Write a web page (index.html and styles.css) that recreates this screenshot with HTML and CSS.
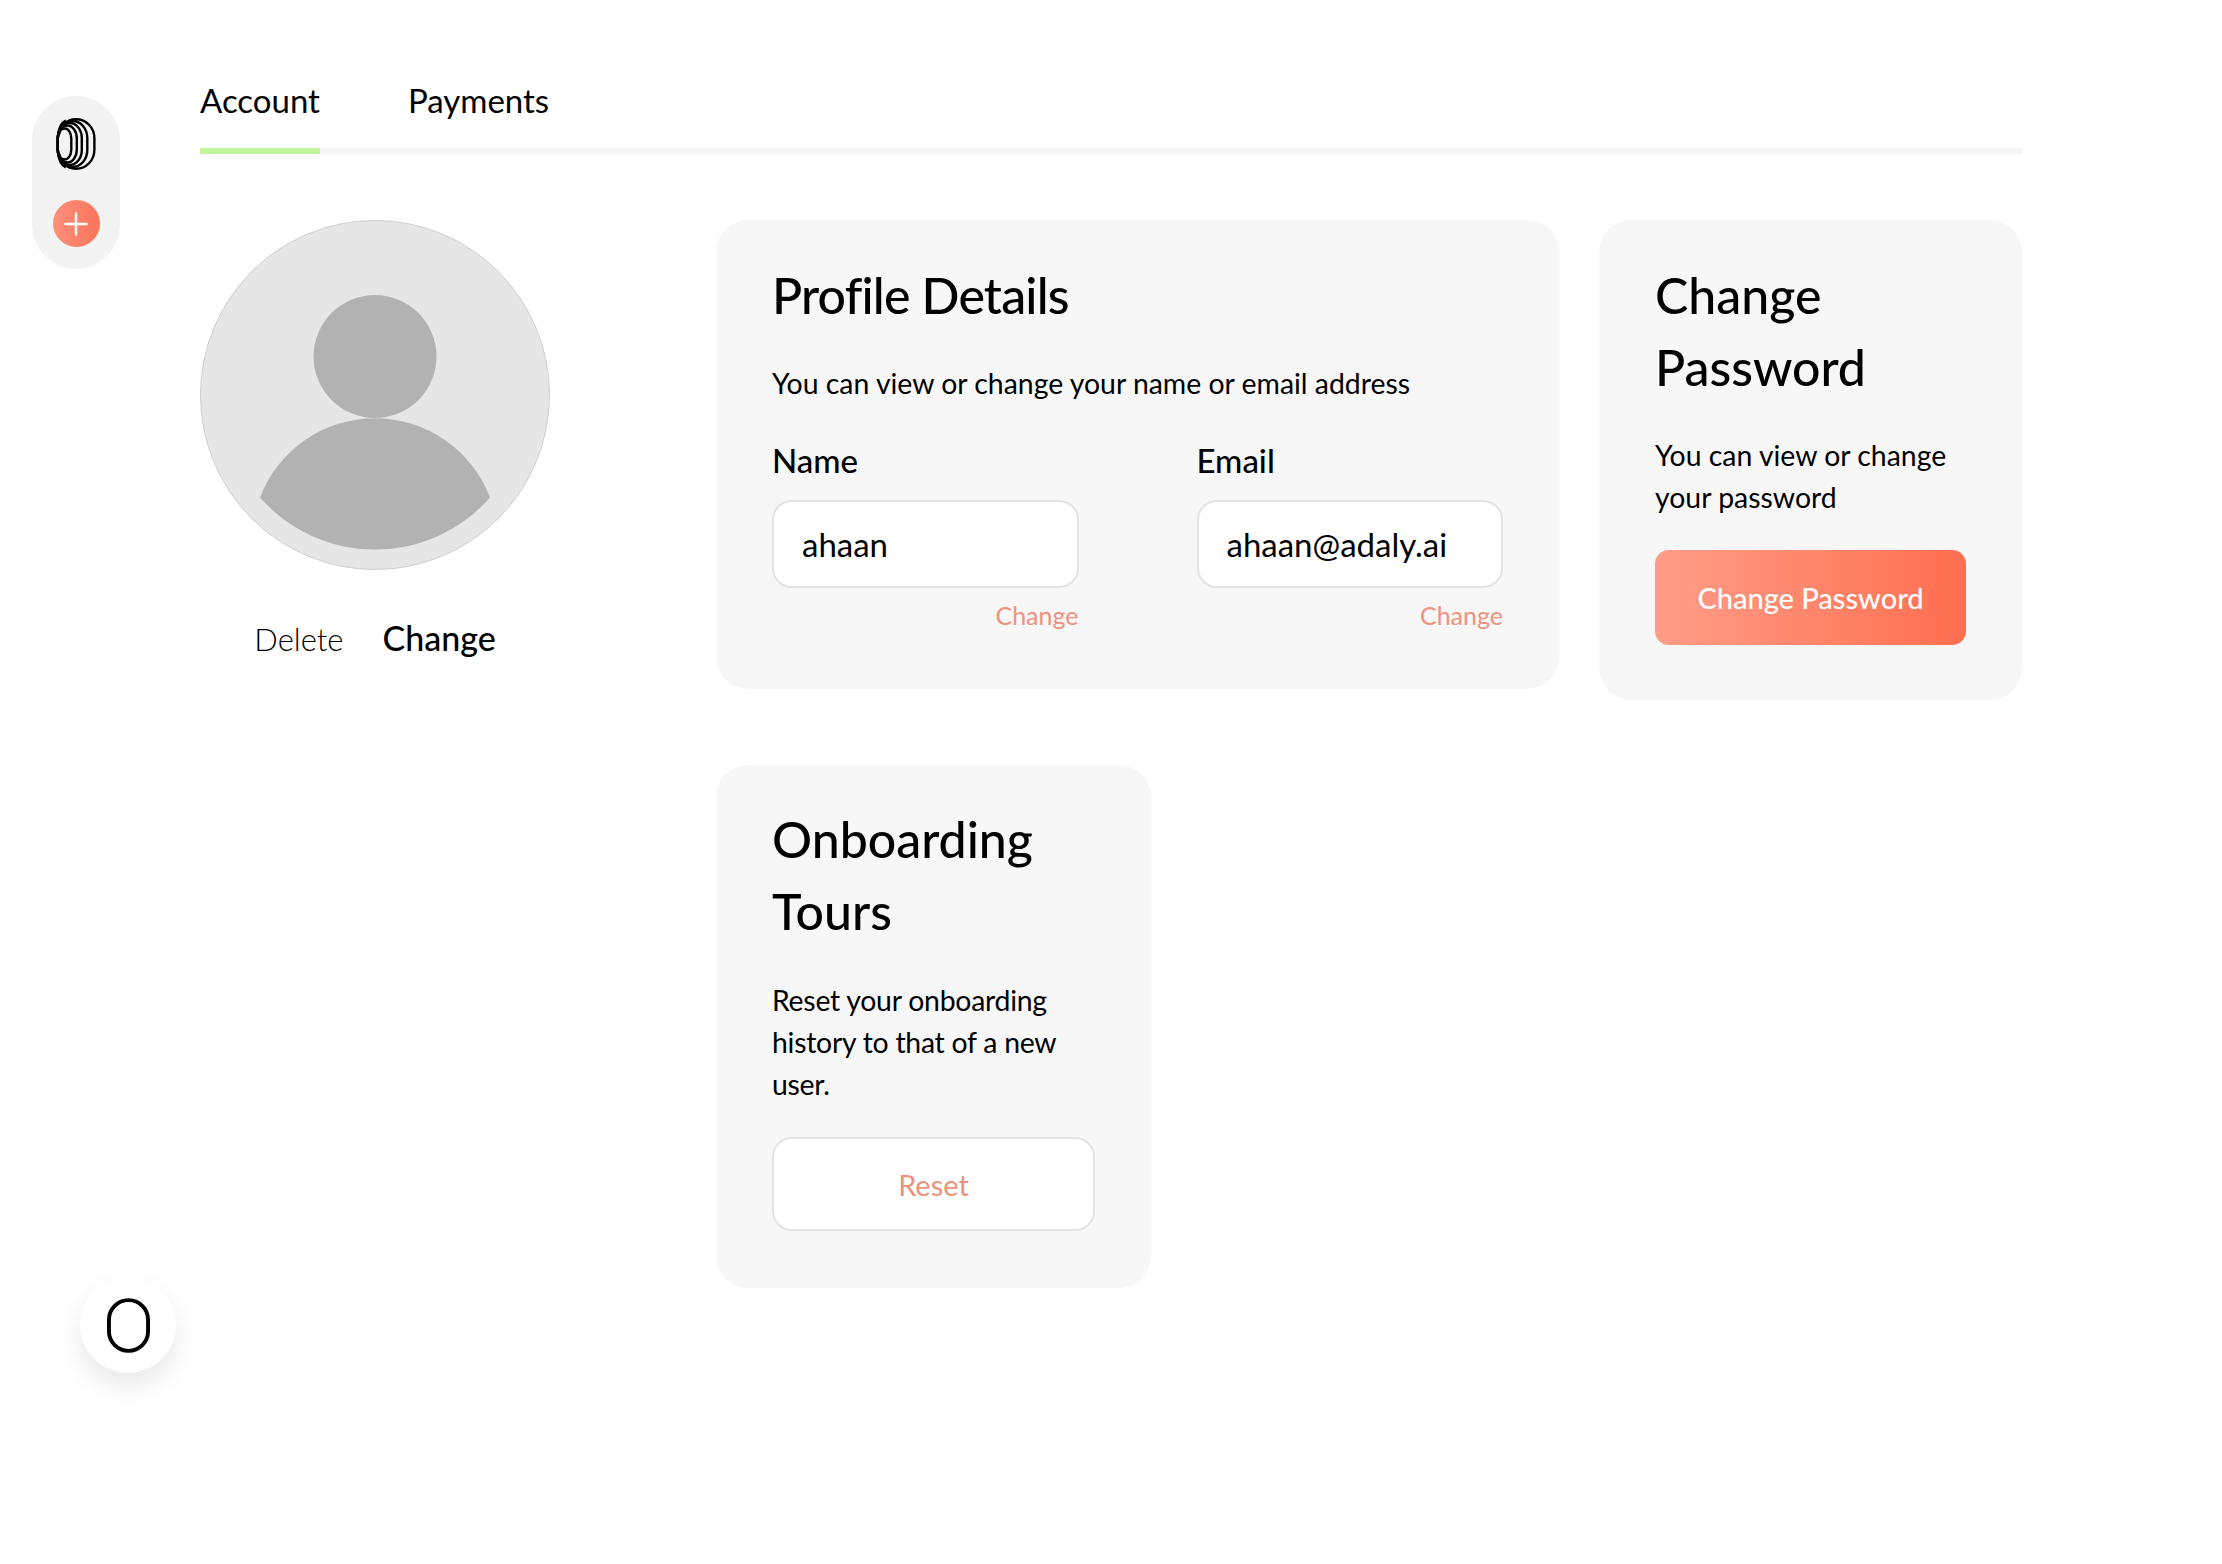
FILE: index.html
```html
<!DOCTYPE html>
<html lang="en">
<head>
    <meta charset="UTF-8" />
    <meta name="viewport" content="width=device-width, initial-scale=1.0"/>
    <title>Account</title>
    <link rel="stylesheet" href="styles.css">
</head>
<body>
    <aside class="side-pill">
        <svg class="logo" viewBox="0 0 40 52" fill="none" stroke="#000" stroke-width="2.4">
            <rect x="1.8" y="10.5" width="13.5" height="31" rx="6.7" ry="10"/>
            <rect x="1.8" y="7.5" width="19" height="37" rx="9.5" ry="13"/>
            <rect x="1.8" y="5" width="24" height="42" rx="12" ry="15"/>
            <rect x="1.8" y="3" width="29.5" height="46" rx="14.7" ry="17"/>
            <rect x="1.8" y="1.2" width="36.6" height="49.6" rx="18.3" ry="19"/>
            <path d="M2.8 16 C3.6 9 6 5 10 3 M2.8 36 C3.6 43 6 47 10 49" stroke-width="3.4"/>
        </svg>
        <button class="add-btn" type="button">
            <svg viewBox="0 0 24 24" fill="none" stroke="#fff" stroke-width="2.4" stroke-linecap="round">
                <path d="M12 1.5v21M1.5 12h21"/>
            </svg>
        </button>
    </aside>

    <main class="main">
        <nav class="tabs">
            <a class="tab active">Account</a>
            <a class="tab">Payments</a>
        </nav>

        <div class="content">
            <section class="avatar-col">
                <svg class="avatar" viewBox="0 0 350 350">
                    <circle cx="175" cy="175" r="174.5" fill="#e6e6e6" stroke="#cfcfcf"/>
                    <circle cx="175" cy="136.5" r="61.5" fill="#b2b2b2"/>
                    <path d="M60 277.5 A123 123 0 0 1 290 277.5 A153 153 0 0 1 60 277.5 Z" fill="#b2b2b2"/>
                </svg>
                <div class="avatar-actions">
                    <a class="link-delete">Delete</a>
                    <a class="link-change">Change</a>
                </div>
            </section>

            <div class="cards">
                <section class="card card-profile">
                    <h2>Profile Details</h2>
                    <p>You can view or change your name or email address</p>
                    <div class="fields">
                        <div class="field">
                            <label>Name</label>
                            <input type="text" value="ahaan" />
                            <a class="field-change">Change</a>
                        </div>
                        <div class="field">
                            <label>Email</label>
                            <input type="text" value="ahaan@adaly.ai" />
                            <a class="field-change">Change</a>
                        </div>
                    </div>
                </section>

                <section class="card card-password">
                    <h2>Change Password</h2>
                    <p>You can view or change your password</p>
                    <button class="btn-primary" type="button">Change Password</button>
                </section>

                <section class="card card-tours">
                    <h2>Onboarding Tours</h2>
                    <p>Reset your onboarding history to that of a new user.</p>
                    <button class="btn-outline" type="button">Reset</button>
                </section>
            </div>
        </div>
    </main>

    <button class="float-btn" type="button">
        <svg viewBox="0 0 44 56" fill="none" stroke="#000" stroke-width="4">
            <rect x="2" y="2" width="40" height="52" rx="20"/>
        </svg>
    </button>
</body>
</html>
```

FILE: styles.css
```css
:root {
    --card-bg: #f7f7f7;
    --accent-text: #ee9280;
    --border: #e4e4e4;
}

* {
    box-sizing: border-box;
}

body {
    margin: 0;
    font-family: Lato, "Liberation Sans", sans-serif;
    background: #fff;
    color: #000;
    display: flex;
    align-items: flex-start;
    min-height: 1564px;
    position: relative;
}

.side-pill {
    width: 88px;
    height: 173px;
    margin: 96px 0 0 32px;
    padding-top: 22px;
    background: #f3f3f3;
    border-radius: 44px;
    display: flex;
    flex-direction: column;
    align-items: center;
    gap: 30px;
    flex: none;
}

.logo {
    width: 40px;
    height: 52px;
}

.add-btn {
    width: 47px;
    height: 47px;
    padding: 0;
    border: none;
    border-radius: 50%;
    background: linear-gradient(90deg, #fc8f7c, #fb7559);
    display: flex;
    align-items: center;
    justify-content: center;
}

.add-btn svg {
    width: 24px;
    height: 24px;
}

.main {
    width: 1822px;
    margin: 60px 0 0 80px;
    flex: none;
}

/* Tabs */
.tabs {
    display: flex;
    gap: 88px;
    height: 94px;
    border-bottom: 6px solid #f5f5f5;
}

.tab {
    font-size: 33px;
    line-height: 80px;
    height: 94px;
}

.tab.active {
    border-bottom: 6px solid #c5f59a;
}

.content {
    display: flex;
    align-items: flex-start;
    margin-top: 66px;
}

/* Avatar */
.avatar-col {
    width: 516px;
    flex: none;
}

.avatar {
    display: block;
    width: 350px;
    height: 350px;
}

.avatar-actions {
    width: 350px;
    display: flex;
    justify-content: center;
    align-items: baseline;
    gap: 39px;
    margin-top: 46px;
    line-height: 44px;
}

.link-delete {
    font-size: 31px;
    font-weight: 300;
}

.link-change {
    font-size: 34px;
    font-weight: 500;
}

/* Cards */
.cards {
    width: 1306px;
    display: flex;
    flex-wrap: wrap;
    align-items: flex-start;
    gap: 65px 40px;
}

.card {
    background: var(--card-bg);
    border-radius: 32px;
    padding: 39px 56px 0;
}

.card h2 {
    margin: 0;
    font-size: 50px;
    font-weight: 500;
    line-height: 72px;
}

.card p {
    margin: 31px 0 0;
    font-size: 28.4px;
    line-height: 42px;
}

.card-profile {
    width: 843px;
    height: 469px;
}

.card-profile h2 {
    letter-spacing: -0.8px;
}

.card-password {
    width: 423px;
    height: 480px;
}

.card-tours {
    width: 435px;
    height: 523px;
    padding-top: 38px;
}

.card-tours p {
    margin-top: 32px;
    letter-spacing: -0.25px;
}

.fields {
    display: flex;
    gap: 118px;
    margin-top: 34px;
}

.field {
    flex: 1;
    display: flex;
    flex-direction: column;
}

.field label {
    font-size: 33px;
    font-weight: 500;
    line-height: 44px;
}

.field input {
    width: 100%;
    height: 88px;
    margin-top: 18px;
    padding: 0 28px;
    border: 2px solid var(--border);
    border-radius: 20px;
    background: #fff;
    font-family: inherit;
    font-size: 33px;
    color: #000;
}

.field-change {
    align-self: flex-end;
    margin-top: 11px;
    font-size: 25px;
    line-height: 32px;
    color: var(--accent-text);
}

.btn-primary,
.btn-outline {
    display: block;
    width: 100%;
    font-family: inherit;
    font-size: 29px;
}

.btn-primary {
    height: 95px;
    margin-top: 32px;
    border: none;
    border-radius: 14px;
    background: linear-gradient(90deg, #fe9d88, #ff6f4f);
    color: #fff;
    font-weight: 500;
}

.btn-outline {
    height: 94px;
    margin-top: 32px;
    border: 2px solid var(--border);
    border-radius: 20px;
    background: #fff;
    color: var(--accent-text);
}

/* Floating button */
.float-btn {
    position: absolute;
    left: 80px;
    top: 1277px;
    width: 96px;
    height: 96px;
    padding: 0;
    border: none;
    border-radius: 50%;
    background: #fff;
    box-shadow: 0 12px 26px rgba(0,0,0,0.09);
    display: flex;
    align-items: center;
    justify-content: center;
}

.float-btn svg {
    width: 43px;
    height: 55px;
}
```
